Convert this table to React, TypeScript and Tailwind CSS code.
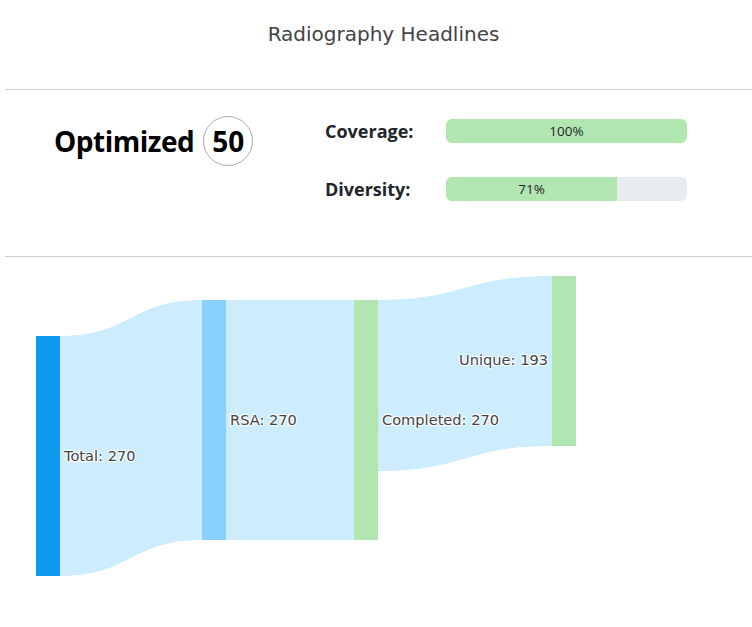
import React from "react";

const Bar = ({ pct }: { pct: number }) => (
  <div className="h-[24px] w-[241px] rounded-[6px] bg-[#e9ecef] overflow-hidden">
    <div
      className="h-full bg-[#b1e6b1] flex items-center justify-center text-[13.5px] text-[#212529]"
      style={{ width: `${pct}%`, fontFamily: '"Open Sans", sans-serif' }}
    >
      {pct}%
    </div>
  </div>
);

export default function App() {
  const labelStyle: React.CSSProperties = {
    fontFamily: '"DejaVu Sans", sans-serif',
    fontSize: 14.6,
    fill: "#444",
    textShadow:
      "1px 1px 1px #fff, -1px -1px 1px #fff, 1px -1px 1px #fff, -1px 1px 1px #fff",
  };
  return (
    <div className="w-[752px] h-[627px] bg-white overflow-hidden">
      <div
        className="h-[89px] pt-[19px] pl-[15px] text-center text-[20px] text-[#444]"
        style={{ fontFamily: '"DejaVu Sans", sans-serif' }}
      >
        Radiography Headlines
      </div>
      <div className="ml-[5px] h-px bg-[#cccccc]" />
      <div
        className="h-[166px] flex"
        style={{ fontFamily: '"Open Sans", sans-serif' }}
      >
        <div className="pl-[54px] pt-[26px] w-[325px] flex items-start">
          <div className="flex items-center gap-[9px]">
            <span className="text-[28px] font-bold text-black leading-none tracking-[-0.5px]">
              Optimized
            </span>
            <span className="w-[50px] h-[50px] rounded-full border border-[#aaaaaa] flex items-center justify-center text-[28px] font-bold text-black leading-none">
              50
            </span>
          </div>
        </div>
        <div className="pt-[29px] flex flex-col gap-[34px]">
          <div className="flex items-center">
            <span className="w-[121px] text-[18px] font-bold text-[#212529] leading-none">
              Coverage:
            </span>
            <Bar pct={100} />
          </div>
          <div className="flex items-center">
            <span className="w-[121px] text-[18px] font-bold text-[#212529] leading-none">
              Diversity:
            </span>
            <Bar pct={71} />
          </div>
        </div>
      </div>
      <div className="ml-[5px] h-px bg-[#cccccc]" />
      <svg width="752" height="370" viewBox="0 257 752 370" className="block">
        <path
          d="M60,336 C131,336 131,300 202,300 L202,540 C131,540 131,576 60,576 Z"
          fill="#cdecfe"
        />
        <path d="M226,300 L354,300 L354,540 L226,540 Z" fill="#cdecfe" />
        <path
          d="M378,300 C465,300 465,276 552,276 L552,446 C465,446 465,471 378,471 Z"
          fill="#cdecfe"
        />
        <rect x="36" y="336" width="24" height="240" fill="#0f99ef" />
        <rect x="202" y="300" width="24" height="240" fill="#88d0ff" />
        <rect x="354" y="300" width="24" height="240" fill="#b1e6b1" />
        <rect x="552" y="276" width="24" height="170" fill="#b1e6b1" />
        <text x="64" y="455" dominantBaseline="central" style={labelStyle}>
          Total: 270
        </text>
        <text x="230" y="419" dominantBaseline="central" style={labelStyle}>
          RSA: 270
        </text>
        <text x="382" y="419" dominantBaseline="central" style={labelStyle}>
          Completed: 270
        </text>
        <text
          x="548"
          y="359"
          dominantBaseline="central"
          textAnchor="end"
          style={labelStyle}
        >
          Unique: 193
        </text>
      </svg>
    </div>
  );
}
